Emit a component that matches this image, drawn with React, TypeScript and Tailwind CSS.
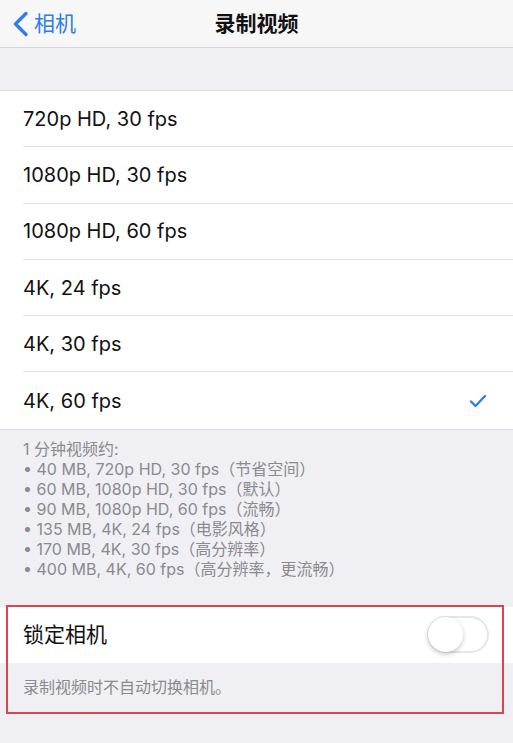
import React, { useState } from 'react';

const FONT = { fontFamily: 'Inter, "Noto Sans CJK SC", sans-serif' };

const options = [
  '720p HD, 30 fps',
  '1080p HD, 30 fps',
  '1080p HD, 60 fps',
  '4K, 24 fps',
  '4K, 30 fps',
  '4K, 60 fps',
];

const notes = [
  '• 40 MB, 720p HD, 30 fps（节省空间）',
  '• 60 MB, 1080p HD, 30 fps（默认）',
  '• 90 MB, 1080p HD, 60 fps（流畅）',
  '• 135 MB, 4K, 24 fps（电影风格）',
  '• 170 MB, 4K, 30 fps（高分辨率）',
  '• 400 MB, 4K, 60 fps（高分辨率，更流畅）',
];

const App: React.FC = () => {
  const [selected, setSelected] = useState(5);
  const [locked, setLocked] = useState(false);

  return (
    <div className="w-[513px] h-[743px] bg-[#efeff4] overflow-hidden" style={FONT}>
      {/* Nav bar */}
      <div className="relative h-[48px] bg-[#f7f7f7] border-b border-[#d6d6da] flex items-center">
        <button className="flex items-center pl-[12px] text-[#2f7ee6]">
          <svg className="w-[17px] h-[26px]" viewBox="0 0 17 26" fill="none">
            <path d="M14 2.5L3.5 13L14 23.5" stroke="currentColor" strokeWidth="3.4" strokeLinecap="round" strokeLinejoin="round" />
          </svg>
          <span className="ml-[5px] text-[21px] leading-none">相机</span>
        </button>
        <h1 className="absolute left-1/2 -translate-x-1/2 text-[21px] font-semibold text-[#111]">录制视频</h1>
      </div>

      <div className="h-[42px]" />

      {/* Options list */}
      <div className="bg-white border-t border-[#dcdce0]">
        {options.map((o, i) => (
          <div key={o} onClick={() => setSelected(i)} className="pl-[23px] cursor-pointer">
            <div className={`h-[56.3px] flex items-center justify-between pr-[26px] ${i < options.length - 1 ? 'border-b border-[#e3e3e6]' : ''}`}>
              <span className="text-[20px] text-[#111]">{o}</span>
              {selected === i && (
                <svg className="w-[18px] h-[14px]" viewBox="0 0 18 14" fill="none">
                  <path d="M2 7.5L6.5 12L16 2" stroke="#2f7ee6" strokeWidth="2.4" strokeLinecap="round" strokeLinejoin="round" />
                </svg>
              )}
            </div>
          </div>
        ))}
      </div>

      {/* Footer notes */}
      <div className="border-t border-[#dcdce0] pl-[23px] pt-[9px] text-[16px] leading-[20px] text-[#8a8a8f]">
        <p>1 分钟视频约:</p>
        {notes.map((n) => (
          <p key={n}>{n}</p>
        ))}
      </div>

      {/* Lock camera section */}
      <div className="relative mt-[28px]">
        <div className="bg-white h-[56px] flex items-center justify-between pl-[23px] pr-[24px]">
          <span className="text-[21px] text-[#111]">锁定相机</span>
          <button
            onClick={() => setLocked(!locked)}
            className={`relative w-[62px] h-[37px] rounded-full border-2 ${locked ? 'bg-[#4cd964] border-[#4cd964]' : 'bg-white border-[#e6e6ea]'}`}
          >
            <span className={`absolute top-[-1px] w-[35px] h-[35px] rounded-full bg-white shadow-[0_2px_5px_rgba(0,0,0,0.22)] ${locked ? 'left-[24px]' : 'left-[-1px]'}`} />
          </button>
        </div>
        <div className="pl-[23px] pt-[14px] pb-[18px] text-[16px] leading-[20px] text-[#8a8a8f]">
          录制视频时不自动切换相机。
        </div>
        <div className="absolute left-[6px] top-[-2px] w-[498px] h-[109px] border-2 border-[#d9464f] pointer-events-none" />
      </div>
    </div>
  );
};

export default App;
